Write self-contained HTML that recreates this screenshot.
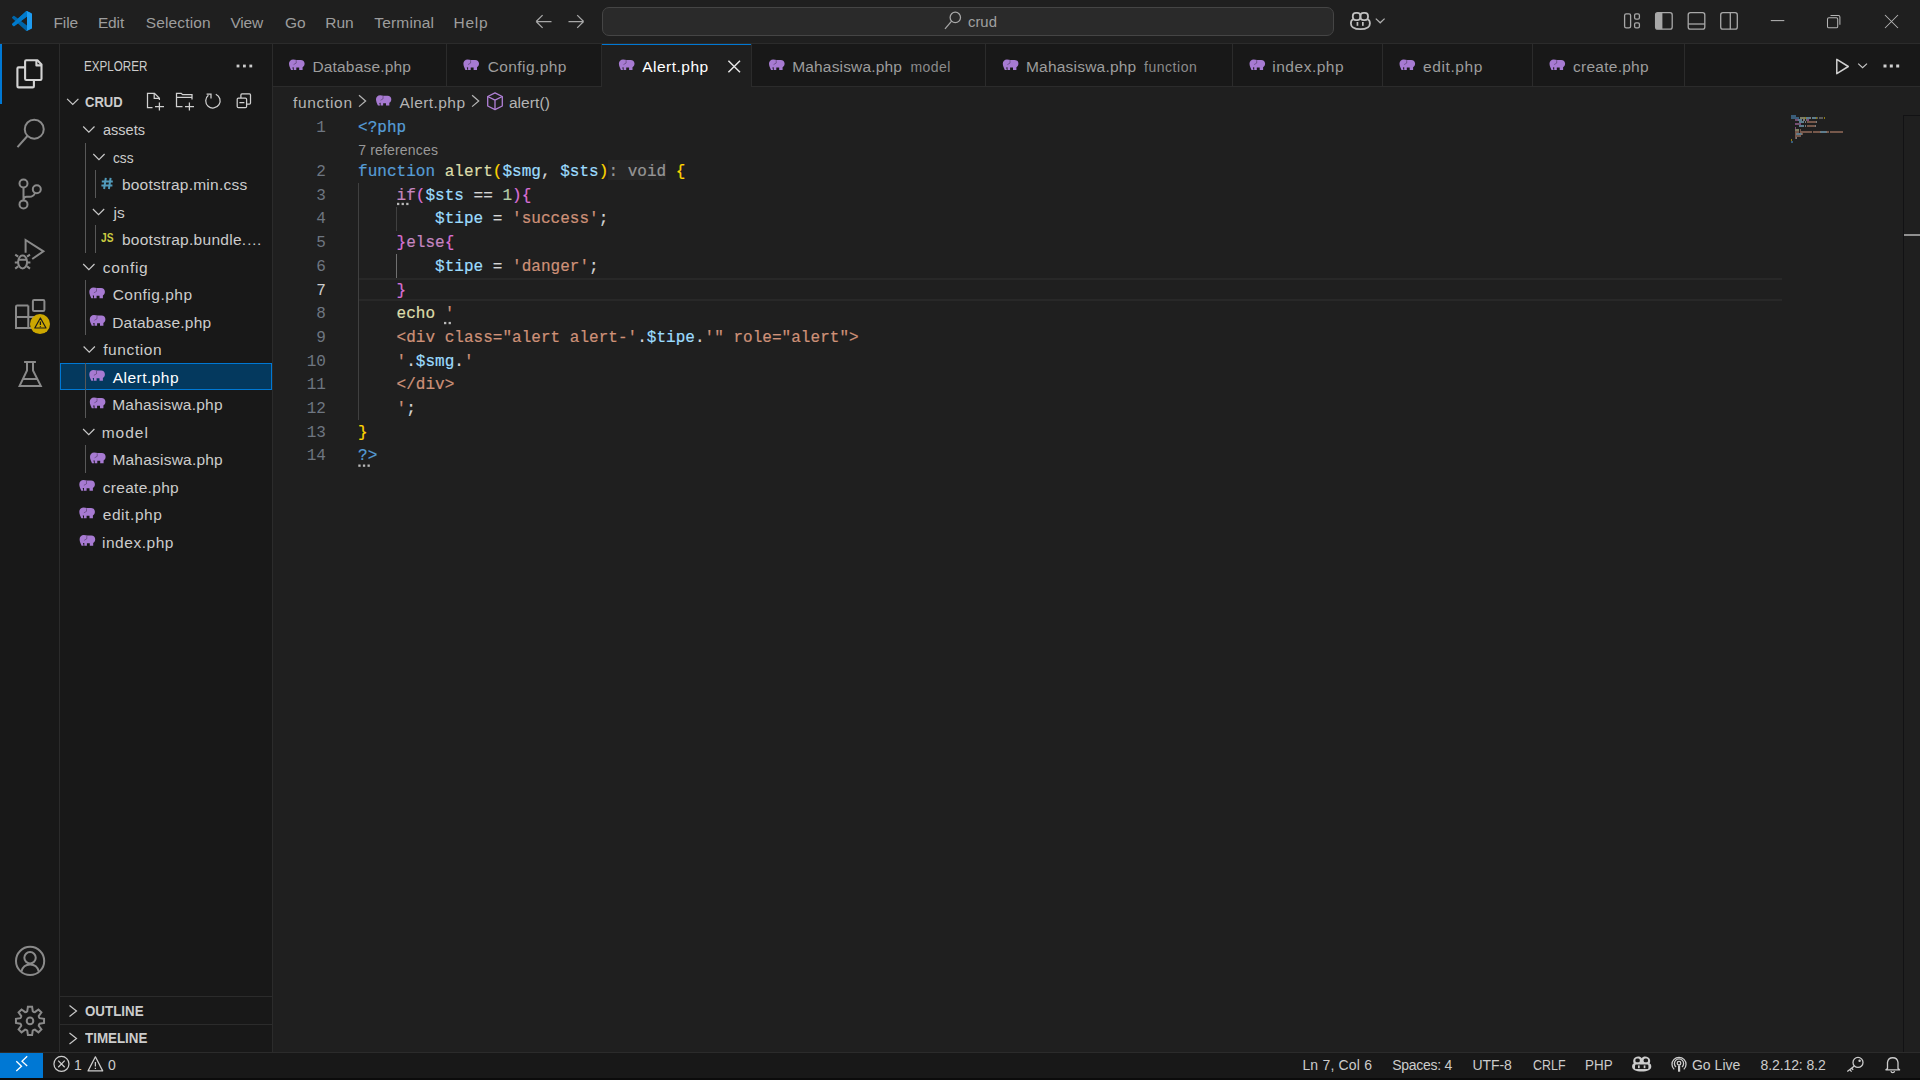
<!DOCTYPE html>
<html><head><meta charset="utf-8">
<style>
*{margin:0;padding:0;box-sizing:border-box}
html,body{width:1920px;height:1080px;overflow:hidden;background:#1f1f1f;font-family:"Liberation Sans",sans-serif;color:#cccccc}
.a{position:absolute}
.t{position:absolute;white-space:pre;line-height:1}
svg{position:absolute;overflow:visible}
.code,.ln{position:absolute;font-family:"Liberation Mono",monospace;font-size:16px;line-height:23.7px;white-space:pre;letter-spacing:0.025px}
.code{left:358px;color:#d4d4d4;-webkit-text-stroke:0.2px currentColor}
.ln{color:#6e7681;width:60px;text-align:right;left:266px}
.kw{color:#569cd6}.fn{color:#dcdcaa}.vr{color:#9cdcfe}.ctl{color:#c586c0}.str{color:#ce9178}.num{color:#b5cea8}.b1{color:#ffd700}.b2{color:#da70d6}.b3{color:#179fff}
.ih{color:#969696}
</style></head><body>
<svg width="0" height="0" style="position:absolute"><defs>
<g id="ele"><path fill="#a77ad2" d="M4.2 0.2C1.8 0.2 0 1.9 0 4.3C0 6.5 1 8.6 2 10.8H4.1L3.4 8.2L4.7 8V10.8H7.3V8.3H10.2V10.8H13.6V8C14.9 7.3 15.6 6 15.6 4.3C15.6 2.2 14 0.7 11.8 0.7H7.6C6.7 0.4 5.5 0.2 4.2 0.2Z"/><path d="M7.2 0.9V3.9L4.6 5.4" fill="none" stroke="#000" stroke-opacity="0.45" stroke-width="0.7"/></g>
<g id="earline"></g>
</defs></svg>
<div class="a" style="left:0px;top:0px;width:1920px;height:43px;background:#1f1f1f;"></div>
<div class="a" style="left:0px;top:43px;width:1920px;height:1px;background:#2b2b2b;"></div>
<div class="a" style="left:0px;top:44px;width:59px;height:1008px;background:#181818;"></div>
<div class="a" style="left:59px;top:44px;width:1px;height:1008px;background:#2b2b2b;"></div>
<div class="a" style="left:0px;top:44px;width:2px;height:60px;background:#0078d4;"></div>
<div class="a" style="left:60px;top:44px;width:212px;height:1008px;background:#181818;"></div>
<div class="a" style="left:272px;top:44px;width:1px;height:1008px;background:#2b2b2b;"></div>
<div class="a" style="left:273px;top:44px;width:1647px;height:42px;background:#181818;"></div>
<div class="a" style="left:273px;top:86px;width:1647px;height:1px;background:#2b2b2b;"></div>
<div class="a" style="left:0px;top:1053px;width:1920px;height:25px;background:#181818;"></div>
<div class="a" style="left:0px;top:1052px;width:1920px;height:1px;background:#2b2b2b;"></div>
<div class="a" style="left:0px;top:1053px;width:43px;height:25px;background:#0078d4;"></div>
<div class="a" style="left:0px;top:1078px;width:1920px;height:2px;background:#0b0b0b;"></div>
<svg width="20" height="20" viewBox="0 0 100 100" style="left:12px;top:11px">
<path fill="#0065a9" d="M96.5 10.8 75.9 0.9a6.2 6.2 0 0 0-7.1 1.2L29.4 38 12.2 25a4.2 4.2 0 0 0-5.3.2L1.4 30.2a4.2 4.2 0 0 0 0 6.2L16.3 50 1.4 63.6a4.2 4.2 0 0 0 0 6.2l5.5 5a4.2 4.2 0 0 0 5.3.2l17.2-13 39.4 35.9a6.2 6.2 0 0 0 7.1 1.2l20.6-9.9A6.2 6.2 0 0 0 100 83.6V16.4a6.2 6.2 0 0 0-3.5-5.6zM75 72.7 45.1 50 75 27.3z"/>
<path fill="#007acc" d="M96.5 10.8 75.9 0.9a6.2 6.2 0 0 0-7.1 1.2L1.4 63.6a4.2 4.2 0 0 0 0 6.2l5.5 5a4.2 4.2 0 0 0 5.3.2L93.3 13.5c2.7-2.1 6.7-.2 6.7 3.3v-.2a6.2 6.2 0 0 0-3.5-5.8z"/>
<path fill="#1f9cf0" d="M75.9 99.1a6.2 6.2 0 0 1-7.1-1.2c2.3 2.3 6.2.7 6.2-2.6V4.7c0-3.3-3.9-4.9-6.2-2.6a6.2 6.2 0 0 1 7.1-1.2l20.6 9.9A6.2 6.2 0 0 1 100 16.4v67.2a6.2 6.2 0 0 1-3.5 5.6z"/>
</svg>
<div class="a" style="left:602px;top:7px;width:732px;height:28.8px;background:#2a2a2a;border:1px solid #454545;border-radius:7px;box-sizing:border-box"></div>
<div class="a" style="left:60px;top:362.5px;width:212px;height:27.5px;background:#04395e;border:1px solid #0078d4;box-sizing:border-box"></div>
<div class="a" style="left:85px;top:142.5px;width:1px;height:110px;background:#585858;"></div>
<div class="a" style="left:95px;top:170px;width:1px;height:27.5px;background:#585858;"></div>
<div class="a" style="left:95px;top:225px;width:1px;height:27.5px;background:#585858;"></div>
<div class="a" style="left:85px;top:280px;width:1px;height:55px;background:#585858;"></div>
<div class="a" style="left:85px;top:362.5px;width:1px;height:55px;background:#585858;"></div>
<div class="a" style="left:85px;top:445px;width:1px;height:27.5px;background:#585858;"></div>
<div class="a" style="left:60px;top:996px;width:212px;height:1px;background:#2b2b2b;"></div>
<div class="a" style="left:60px;top:1024px;width:212px;height:1px;background:#2b2b2b;"></div>
<div class="a" style="left:446px;top:44px;width:1px;height:42px;background:#2b2b2b;"></div>
<div class="a" style="left:601px;top:44px;width:1px;height:42px;background:#2b2b2b;"></div>
<div class="a" style="left:601.5px;top:44px;width:149.5px;height:43px;background:#1f1f1f;"></div>
<div class="a" style="left:601.5px;top:44px;width:149.5px;height:1.4px;background:#0078d4;"></div>
<div class="a" style="left:751px;top:44px;width:1px;height:42px;background:#2b2b2b;"></div>
<div class="a" style="left:985px;top:44px;width:1px;height:42px;background:#2b2b2b;"></div>
<div class="a" style="left:1232px;top:44px;width:1px;height:42px;background:#2b2b2b;"></div>
<div class="a" style="left:1382px;top:44px;width:1px;height:42px;background:#2b2b2b;"></div>
<div class="a" style="left:1532px;top:44px;width:1px;height:42px;background:#2b2b2b;"></div>
<div class="a" style="left:1684px;top:44px;width:1px;height:42px;background:#2b2b2b;"></div>
<div class="a" style="left:601px;top:44px;width:1px;height:43px;background:#2b2b2b;"></div>
<div class="a" style="left:608.2px;top:160px;width:57.6px;height:19.8px;background:#262626;"></div>
<div class="a" style="left:358px;top:278.2px;width:1424px;height:1.8px;background:#282828;"></div>
<div class="a" style="left:358px;top:299.2px;width:1424px;height:1.8px;background:#282828;"></div>
<div class="a" style="left:358px;top:183.2px;width:1px;height:237.0px;background:#404040;"></div>
<div class="a" style="left:396px;top:206.9px;width:1px;height:23.7px;background:#404040;"></div>
<div class="a" style="left:396px;top:254.3px;width:1px;height:23.7px;background:#707070;"></div>
<div class="ln" style="top:117.00px;color:#6e7681">1</div>
<div class="code" style="top:117.00px"><span class="kw">&lt;?php</span></div>
<div class="ln" style="top:161.00px;color:#6e7681">2</div>
<div class="code" style="top:161.00px"><span class="kw">function</span> <span class="fn">alert</span><span class="b1">(</span><span class="vr">$smg</span>, <span class="vr">$sts</span><span class="b1">)</span><span class="ih">: void</span> <span class="b1">{</span></div>
<div class="ln" style="top:184.70px;color:#6e7681">3</div>
<div class="code" style="top:184.70px">    <span class="ctl">if</span><span class="b2">(</span><span class="vr">$sts</span> == <span class="num">1</span><span class="b2">){</span></div>
<div class="ln" style="top:208.40px;color:#6e7681">4</div>
<div class="code" style="top:208.40px">        <span class="vr">$tipe</span> = <span class="str">'success'</span>;</div>
<div class="ln" style="top:232.10px;color:#6e7681">5</div>
<div class="code" style="top:232.10px">    <span class="b2">}</span><span class="ctl">else</span><span class="b2">{</span></div>
<div class="ln" style="top:255.80px;color:#6e7681">6</div>
<div class="code" style="top:255.80px">        <span class="vr">$tipe</span> = <span class="str">'danger'</span>;</div>
<div class="ln" style="top:279.50px;color:#cccccc">7</div>
<div class="code" style="top:279.50px">    <span class="b2">}</span></div>
<div class="ln" style="top:303.20px;color:#6e7681">8</div>
<div class="code" style="top:303.20px">    <span class="fn">echo</span> <span class="str">'</span></div>
<div class="ln" style="top:326.90px;color:#6e7681">9</div>
<div class="code" style="top:326.90px">    <span class="str">&lt;div class="alert alert-'</span>.<span class="vr">$tipe</span>.<span class="str">'" role="alert"&gt;</span></div>
<div class="ln" style="top:350.60px;color:#6e7681">10</div>
<div class="code" style="top:350.60px">    <span class="str">'</span>.<span class="vr">$smg</span>.<span class="str">'</span></div>
<div class="ln" style="top:374.30px;color:#6e7681">11</div>
<div class="code" style="top:374.30px">    <span class="str">&lt;/div&gt;</span></div>
<div class="ln" style="top:398.00px;color:#6e7681">12</div>
<div class="code" style="top:398.00px">    <span class="str">'</span>;</div>
<div class="ln" style="top:421.70px;color:#6e7681">13</div>
<div class="code" style="top:421.70px"><span class="b1">}</span></div>
<div class="ln" style="top:445.40px;color:#6e7681">14</div>
<div class="code" style="top:445.40px"><span class="kw">?&gt;</span></div>
<div class="a" style="left:1903px;top:115px;width:1px;height:937px;background:#121214;"></div>
<div class="a" style="left:1903px;top:115px;width:17px;height:1px;background:#121214;"></div>
<div class="a" style="left:1904px;top:234px;width:16px;height:2px;background:#909090;"></div>
<div class="a" style="left:1791px;top:115px;width:5px;height:2px;background:#569cd6;opacity:0.5"></div><div class="a" style="left:1791px;top:117px;width:8px;height:2px;background:#569cd6;opacity:0.5"></div><div class="a" style="left:1800px;top:117px;width:5px;height:2px;background:#dcdcaa;opacity:0.5"></div><div class="a" style="left:1805px;top:117px;width:1px;height:2px;background:#ffd700;opacity:0.5"></div><div class="a" style="left:1806px;top:117px;width:4px;height:2px;background:#9cdcfe;opacity:0.5"></div><div class="a" style="left:1810px;top:117px;width:1px;height:2px;background:#d4d4d4;opacity:0.5"></div><div class="a" style="left:1812px;top:117px;width:4px;height:2px;background:#9cdcfe;opacity:0.5"></div><div class="a" style="left:1816px;top:117px;width:1px;height:2px;background:#ffd700;opacity:0.5"></div><div class="a" style="left:1817px;top:117px;width:1px;height:2px;background:#969696;opacity:0.5"></div><div class="a" style="left:1819px;top:117px;width:4px;height:2px;background:#969696;opacity:0.5"></div><div class="a" style="left:1824px;top:117px;width:1px;height:2px;background:#ffd700;opacity:0.5"></div><div class="a" style="left:1795px;top:119px;width:2px;height:2px;background:#c586c0;opacity:0.5"></div><div class="a" style="left:1797px;top:119px;width:1px;height:2px;background:#da70d6;opacity:0.5"></div><div class="a" style="left:1798px;top:119px;width:4px;height:2px;background:#9cdcfe;opacity:0.5"></div><div class="a" style="left:1803px;top:119px;width:2px;height:2px;background:#d4d4d4;opacity:0.5"></div><div class="a" style="left:1806px;top:119px;width:1px;height:2px;background:#b5cea8;opacity:0.5"></div><div class="a" style="left:1807px;top:119px;width:2px;height:2px;background:#da70d6;opacity:0.5"></div><div class="a" style="left:1799px;top:121px;width:5px;height:2px;background:#9cdcfe;opacity:0.5"></div><div class="a" style="left:1805px;top:121px;width:1px;height:2px;background:#d4d4d4;opacity:0.5"></div><div class="a" style="left:1807px;top:121px;width:9px;height:2px;background:#ce9178;opacity:0.5"></div><div class="a" style="left:1816px;top:121px;width:1px;height:2px;background:#d4d4d4;opacity:0.5"></div><div class="a" style="left:1795px;top:123px;width:1px;height:2px;background:#da70d6;opacity:0.5"></div><div class="a" style="left:1796px;top:123px;width:4px;height:2px;background:#c586c0;opacity:0.5"></div><div class="a" style="left:1800px;top:123px;width:1px;height:2px;background:#da70d6;opacity:0.5"></div><div class="a" style="left:1799px;top:125px;width:5px;height:2px;background:#9cdcfe;opacity:0.5"></div><div class="a" style="left:1805px;top:125px;width:1px;height:2px;background:#d4d4d4;opacity:0.5"></div><div class="a" style="left:1807px;top:125px;width:8px;height:2px;background:#ce9178;opacity:0.5"></div><div class="a" style="left:1815px;top:125px;width:1px;height:2px;background:#d4d4d4;opacity:0.5"></div><div class="a" style="left:1795px;top:127px;width:1px;height:2px;background:#da70d6;opacity:0.5"></div><div class="a" style="left:1795px;top:129px;width:4px;height:2px;background:#dcdcaa;opacity:0.5"></div><div class="a" style="left:1800px;top:129px;width:1px;height:2px;background:#ce9178;opacity:0.5"></div><div class="a" style="left:1795px;top:131px;width:4px;height:2px;background:#ce9178;opacity:0.5"></div><div class="a" style="left:1800px;top:131px;width:12px;height:2px;background:#ce9178;opacity:0.5"></div><div class="a" style="left:1813px;top:131px;width:7px;height:2px;background:#ce9178;opacity:0.5"></div><div class="a" style="left:1820px;top:131px;width:1px;height:2px;background:#d4d4d4;opacity:0.5"></div><div class="a" style="left:1821px;top:131px;width:5px;height:2px;background:#9cdcfe;opacity:0.5"></div><div class="a" style="left:1826px;top:131px;width:1px;height:2px;background:#d4d4d4;opacity:0.5"></div><div class="a" style="left:1827px;top:131px;width:2px;height:2px;background:#ce9178;opacity:0.5"></div><div class="a" style="left:1830px;top:131px;width:13px;height:2px;background:#ce9178;opacity:0.5"></div><div class="a" style="left:1795px;top:133px;width:1px;height:2px;background:#ce9178;opacity:0.5"></div><div class="a" style="left:1796px;top:133px;width:1px;height:2px;background:#d4d4d4;opacity:0.5"></div><div class="a" style="left:1797px;top:133px;width:4px;height:2px;background:#9cdcfe;opacity:0.5"></div><div class="a" style="left:1801px;top:133px;width:1px;height:2px;background:#d4d4d4;opacity:0.5"></div><div class="a" style="left:1802px;top:133px;width:1px;height:2px;background:#ce9178;opacity:0.5"></div><div class="a" style="left:1795px;top:135px;width:6px;height:2px;background:#ce9178;opacity:0.5"></div><div class="a" style="left:1795px;top:137px;width:1px;height:2px;background:#ce9178;opacity:0.5"></div><div class="a" style="left:1796px;top:137px;width:1px;height:2px;background:#d4d4d4;opacity:0.5"></div><div class="a" style="left:1791px;top:139px;width:1px;height:2px;background:#ffd700;opacity:0.5"></div><div class="a" style="left:1791px;top:141px;width:2px;height:2px;background:#569cd6;opacity:0.5"></div>
<svg width="1920" height="1080" style="left:0;top:0"><g fill="none" stroke="#a8a8a8" stroke-width="1.25" stroke-linecap="butt">
<path d="M536.2 21.5H551.5M536.2 21.5L542.6 15.1M536.2 21.5L542.6 27.9"/>
<path d="M568.5 21.5H583.6M583.6 21.5L577.2 15.1M583.6 21.5L577.2 27.9"/>
<circle cx="955.3" cy="17.4" r="5.2"/><path d="M951.6 21.2L945 28.8"/>
</g>
<g fill="none" stroke="#c0c0c0" stroke-width="1.8">
<rect x="1352.8" y="12.8" width="7.6" height="7.4" rx="3.2"/><rect x="1360.4" y="12.8" width="7.6" height="7.4" rx="3.2"/>
<path d="M1353 19.5C1351.3 20 1350.9 21.5 1350.9 23.5C1350.9 27.5 1355 29.2 1360.4 29.2C1365.8 29.2 1369.9 27.5 1369.9 23.5C1369.9 21.5 1369.5 20 1367.8 19.5"/></g>
<rect x="1356.6" y="22" width="1.7" height="3.8" fill="#c0c0c0"/><rect x="1362" y="22" width="1.7" height="3.8" fill="#c0c0c0"/>
<path d="M1375.8 18.6L1380.2 22.8L1384.6 18.6" fill="none" stroke="#b0b0b0" stroke-width="1.2"/>
<g fill="none" stroke="#a8a8a8" stroke-width="1.3">
<rect x="1624.6" y="13.8" width="6" height="14" rx="1.6"/><rect x="1634.6" y="13.8" width="4.8" height="5.4" rx="1.4"/><rect x="1634.6" y="22.9" width="4.8" height="4.9" rx="1.4"/>
<rect x="1655.6" y="12.7" width="16.6" height="16.5" rx="2.2"/>
<rect x="1688.2" y="12.7" width="16.6" height="16.5" rx="2.2"/><path d="M1688.2 24H1704.8"/>
<rect x="1720.7" y="12.7" width="16.6" height="16.5" rx="2.2"/><path d="M1730.3 12.7V29.2"/>
</g><path d="M1657.8 12.7H1662.4V29.2H1657.8A2.2 2.2 0 0 1 1655.6 27V14.9A2.2 2.2 0 0 1 1657.8 12.7Z" fill="#a8a8a8"/>
<g fill="none" stroke="#b4b4b4" stroke-width="1.05">
<path d="M1770.8 20.6H1784.3"/>
<rect x="1827.5" y="17.8" width="10.2" height="10" rx="1.4"/><path d="M1830.5 15.4H1838.3A1.6 1.6 0 0 1 1839.9 17V24.7"/>
<path d="M1885 15L1898 28M1898 15L1885 28"/></g>
<g fill="none" stroke="#d4d4d4" stroke-width="2.1" stroke-linejoin="round">
<path d="M26.3 60.3H37.4L41.5 64.4V78.8A1.2 1.2 0 0 1 40.3 80H26.3A1.2 1.2 0 0 1 25.1 78.8V61.5A1.2 1.2 0 0 1 26.3 60.3Z"/>
<path d="M36.4 60.3V65.4H41.5"/>
<path d="M25.1 67.4H18.6A1.2 1.2 0 0 0 17.4 68.6V86.2A1.2 1.2 0 0 0 18.6 87.4H32.7A1.2 1.2 0 0 0 33.9 86.2V80"/>
</g>
<g fill="none" stroke="#8a8a8a" stroke-width="2">
<circle cx="34.25" cy="129.15" r="9.5"/><path d="M27.4 136L17.5 147.2"/>
<circle cx="23.5" cy="183.5" r="4"/><circle cx="36.8" cy="189.3" r="4"/><circle cx="23.5" cy="204.4" r="4"/><path d="M23.5 187.5V200.4M35 193Q33.5 196.8 29.5 196.8H26.5Q24 196.8 23.5 199.8"/>
<path d="M25.6 252.7V240L43.4 251.3L32.2 259"/><ellipse cx="22.6" cy="262" rx="4.5" ry="6.4"/><path d="M18.2 259.7H27M18.2 256.6L15.2 254.6M27 256.6L30 254.6M18 262.6H14.8M27.2 262.6H30.4M18.2 266.4L15.2 268.6M27 266.4L30 268.6"/>
<path d="M28.3 305.5H17.2A1.2 1.2 0 0 0 16 306.7V328.1H37.5V317H16M28.3 305.5V328.1"/><rect x="32.9" y="300" width="11.5" height="11" rx="1.2"/>
<path d="M24.1 362H35.9M27 362V370.5L19.6 385.9H40.8L33 370.5V362M23.2 378.9H37.2"/>
<circle cx="30.1" cy="960.9" r="14.1"/><circle cx="30.05" cy="957.7" r="5.7"/><path d="M21.4 971.6C22.5 967 25.8 964.5 30.1 964.5S37.7 967 38.8 971.6"/>
<path stroke-linejoin="miter" d="M27.90 1006.86 L32.10 1006.86 L32.76 1011.29 L33.71 1011.94 L34.85 1012.15 L38.45 1009.49 L41.41 1012.45 L38.75 1016.05 L38.96 1017.19 L39.61 1018.14 L44.04 1018.80 L44.04 1023.00 L39.61 1023.66 L38.96 1024.61 L38.75 1025.75 L41.41 1029.35 L38.45 1032.31 L34.85 1029.65 L33.71 1029.86 L32.76 1030.51 L32.10 1034.94 L27.90 1034.94 L27.24 1030.51 L26.29 1029.86 L25.15 1029.65 L21.55 1032.31 L18.59 1029.35 L21.25 1025.75 L21.04 1024.61 L20.39 1023.66 L15.96 1023.00 L15.96 1018.80 L20.39 1018.14 L21.04 1017.19 L21.25 1016.05 L18.59 1012.45 L21.55 1009.49 L25.15 1012.15 L26.29 1011.94 L27.24 1011.29 Z"/><circle cx="30" cy="1020.9" r="3.3"/>
</g>
<circle cx="40" cy="324.1" r="10" fill="#cca700"/><path d="M40.4 318L46 328H34.8Z" fill="none" stroke="#1a1a1a" stroke-width="1.2" stroke-linejoin="round"/><path d="M40.4 321.4V325M40.4 326.2V327.2" stroke="#1a1a1a" stroke-width="1.3"/>
<g fill="#cccccc"><rect x="236.6" y="64.6" width="2.8" height="2.8"/><rect x="243" y="64.6" width="2.8" height="2.8"/><rect x="249.4" y="64.6" width="2.8" height="2.8"/></g>
<path d="M67.10 98.80L72.75 104.50L78.40 98.80" fill="none" stroke="#c8c8c8" stroke-width="1.2"/>
<g fill="none" stroke="#d0d0d0" stroke-width="1.25">
<path d="M152.5 107.5H147.5V93.3H154.5L159.4 98.2V100"/><path d="M154.2 93.3V98.3H159.4"/><path d="M159.4 102.4V110.5M155 106.6H164"/>
<path d="M182.5 106.6H176.5V93.3H181.2L182.6 94.7H192V99.6"/><path d="M176.5 97.4H192"/><path d="M189.4 102.4V110.5M185 106.6H194"/>
<path d="M208.4 95.2A7.2 7.2 0 1 0 215.8 94.2"/><path d="M206.6 94H211V98.4"/>
<rect x="237.2" y="98" width="9.4" height="9.7" rx="1.2"/><path d="M240.9 98V94.9A1 1 0 0 1 241.9 93.9H249.5A1 1 0 0 1 250.5 94.9V103A1 1 0 0 1 249.5 104H246.6M239.4 102.7H244.4"/>
</g>
<path d="M83.20 126.50L88.85 132.20L94.50 126.50" fill="none" stroke="#c8c8c8" stroke-width="1.2"/>
<path d="M93.30 154.00L98.95 159.70L104.60 154.00" fill="none" stroke="#c8c8c8" stroke-width="1.2"/>
<path d="M105.80 177.80L104.10 189.00M110.60 177.80L108.90 189.00M101.80 181.40H112.80M101.40 185.40H112.40" fill="none" stroke="#519aba" stroke-width="2"/>
<path d="M92.90 209.00L98.55 214.70L104.20 209.00" fill="none" stroke="#c8c8c8" stroke-width="1.2"/>
<path d="M83.20 264.00L88.85 269.70L94.50 264.00" fill="none" stroke="#c8c8c8" stroke-width="1.2"/>
<use href="#ele" transform="translate(89.30,287.40) scale(1.0)"/>
<use href="#ele" transform="translate(89.80,314.90) scale(1.0)"/>
<path d="M83.60 346.50L89.25 352.20L94.90 346.50" fill="none" stroke="#c8c8c8" stroke-width="1.2"/>
<use href="#ele" transform="translate(89.30,369.90) scale(1.0)"/>
<use href="#ele" transform="translate(89.80,397.40) scale(1.0)"/>
<path d="M83.10 429.00L88.75 434.70L94.40 429.00" fill="none" stroke="#c8c8c8" stroke-width="1.2"/>
<use href="#ele" transform="translate(90.00,452.40) scale(1.0)"/>
<use href="#ele" transform="translate(79.30,479.90) scale(1.0)"/>
<use href="#ele" transform="translate(79.30,507.40) scale(1.0)"/>
<use href="#ele" transform="translate(79.60,534.90) scale(1.0)"/>
<path d="M69.50 1005.50L76.50 1011.00L69.50 1016.50" fill="none" stroke="#c8c8c8" stroke-width="1.2"/>
<path d="M69.50 1033.00L76.50 1038.50L69.50 1044.00" fill="none" stroke="#c8c8c8" stroke-width="1.2"/>
<use href="#ele" transform="translate(289.00,59.20) scale(1.0)"/>
<use href="#ele" transform="translate(463.40,59.20) scale(1.0)"/>
<use href="#ele" transform="translate(618.90,59.20) scale(1.0)"/>
<path d="M728.4 60.8L740 72.2M740 60.8L728.4 72.2" stroke="#e6e6e6" stroke-width="1.5"/>
<use href="#ele" transform="translate(769.00,59.20) scale(1.0)"/>
<use href="#ele" transform="translate(1002.80,59.20) scale(1.0)"/>
<use href="#ele" transform="translate(1249.50,59.20) scale(1.0)"/>
<use href="#ele" transform="translate(1399.50,59.20) scale(1.0)"/>
<use href="#ele" transform="translate(1549.50,59.20) scale(1.0)"/>
<path d="M1836.8 59.3V73.7L1848.3 66.5Z" fill="none" stroke="#d0d0d0" stroke-width="1.5" stroke-linejoin="round"/>
<path d="M1858.2 63.6L1862.6 67.6L1867 63.6" fill="none" stroke="#c8c8c8" stroke-width="1.2"/>
<g fill="#d0d0d0"><rect x="1883.5" y="64.5" width="3" height="3"/><rect x="1889.8" y="64.5" width="3" height="3"/><rect x="1896.2" y="64.5" width="3" height="3"/></g>
<path d="M359.00 95.30L365.60 100.95L359.00 106.60" fill="none" stroke="#b4b4b4" stroke-width="1.25"/>
<use href="#ele" transform="translate(376.00,95.00) scale(0.98)"/>
<path d="M472.10 95.30L478.70 100.95L472.10 106.60" fill="none" stroke="#b4b4b4" stroke-width="1.25"/>
<g fill="none" stroke="#b180d7" stroke-width="1.3" stroke-linejoin="round"><path d="M495 92.8L502.3 96.5V106L495 109.7L487.7 106V96.5Z"/><path d="M487.7 96.5L495 100.2L502.3 96.5M495 100.2V109.7"/></g>
<g fill="#b8b8b8">
<rect x="397.00" y="202.8" width="2.3" height="2.3"/>
<rect x="401.60" y="202.8" width="2.3" height="2.3"/>
<rect x="406.20" y="202.8" width="2.3" height="2.3"/>
<rect x="444.00" y="321.9" width="2.3" height="2.3"/>
<rect x="448.60" y="321.9" width="2.3" height="2.3"/>
<rect x="358.30" y="464.5" width="2.3" height="2.3"/>
<rect x="362.90" y="464.5" width="2.3" height="2.3"/>
<rect x="367.50" y="464.5" width="2.3" height="2.3"/>
</g>
<g fill="none" stroke="#ffffff" stroke-width="1.3"><path d="M16.3 1061.3L21.5 1066.3L16.3 1071"/><path d="M27.2 1056.2L22 1061.2L27.2 1066"/></g>
<g fill="none" stroke="#cccccc" stroke-width="1.25"><circle cx="61.45" cy="1063.9" r="7.5"/><path d="M58.2 1060.6L64.7 1067.2M64.7 1060.6L58.2 1067.2"/>
<path d="M95.4 1056.8L102.7 1070.9H88.1Z" stroke-linejoin="round"/><path d="M95.4 1062V1066.5M95.4 1067.8V1069"/></g>
<g fill="#cccccc"><path d="M1635 1057.5C1637.5 1055.8 1640.5 1056.2 1641.7 1058.2C1642.9 1056.2 1645.9 1055.8 1648.4 1057.5C1650.6 1059 1650.5 1062 1649.6 1063.4C1651 1064 1651.3 1065.3 1651.3 1066.5C1651.3 1069.8 1647.5 1071.5 1641.7 1071.5C1635.9 1071.5 1632.1 1069.8 1632.1 1066.5C1632.1 1065.3 1632.4 1064 1633.8 1063.4C1632.9 1062 1632.8 1059 1635 1057.5Z"/></g>
<g fill="#181818"><rect x="1635.4" y="1058.6" width="4.4" height="3.6" rx="1.5"/><rect x="1643.6" y="1058.6" width="4.4" height="3.6" rx="1.5"/><rect x="1635" y="1064.5" width="13.4" height="4.6" rx="1.2"/></g>
<g fill="#cccccc"><rect x="1638" y="1065.4" width="1.7" height="2.8"/><rect x="1643.7" y="1065.4" width="1.7" height="2.8"/></g>
<g fill="none" stroke="#cccccc" stroke-width="1.3"><circle cx="1679" cy="1063.2" r="1.8"/><path d="M1676 1067A4.6 4.6 0 1 1 1682 1067"/><path d="M1674.2 1069.4A7 7 0 1 1 1683.8 1069.4"/></g><rect x="1678" y="1065.5" width="2.2" height="6.2" fill="#cccccc"/>
<g fill="none" stroke="#cccccc" stroke-width="1.3"><circle cx="1858" cy="1062.4" r="5"/><path d="M1854.4 1066L1847.3 1071.4M1849.7 1069.6L1851.6 1071.6M1851.6 1068.2L1853.2 1069.8"/><circle cx="1859.6" cy="1060.8" r="0.6" fill="#cccccc"/></g>
<g fill="none" stroke="#cccccc" stroke-width="1.3" stroke-linejoin="round"><path d="M1887.5 1068.6V1062.3A5.3 5.3 0 0 1 1898 1062.3V1068.6L1899.6 1069.8H1885.9Z"/><path d="M1890.9 1071.2A1.9 1.9 0 0 0 1894.6 1071.2"/></g></svg>
<div class="t" style="left:53.40px;top:14.78px;font-size:15.5px;color:#9d9d9d;letter-spacing:-0.085px">File</div>
<div class="t" style="left:97.90px;top:14.78px;font-size:15.5px;color:#9d9d9d;letter-spacing:-0.134px">Edit</div>
<div class="t" style="left:145.70px;top:14.78px;font-size:15.5px;color:#9d9d9d;letter-spacing:0.145px">Selection</div>
<div class="t" style="left:230.50px;top:14.78px;font-size:15.5px;color:#9d9d9d;letter-spacing:-0.207px">View</div>
<div class="t" style="left:284.90px;top:14.78px;font-size:15.5px;color:#9d9d9d;letter-spacing:-0.056px">Go</div>
<div class="t" style="left:325.20px;top:14.78px;font-size:15.5px;color:#9d9d9d">Run</div>
<div class="t" style="left:374.30px;top:14.78px;font-size:15.5px;color:#9d9d9d;letter-spacing:0.167px">Terminal</div>
<div class="t" style="left:453.50px;top:14.78px;font-size:15.5px;color:#9d9d9d;letter-spacing:0.714px">Help</div>
<div class="t" style="left:967.70px;top:14.18px;font-size:15.5px;color:#a0a0a0;transform:scaleX(0.9583);transform-origin:0 0">crud</div>
<div class="t" style="left:84.37px;top:59.45px;font-size:14px;color:#cccccc;transform:scaleX(0.8318);transform-origin:0 0">EXPLORER</div>
<div class="t" style="left:85.20px;top:95.15px;font-size:14px;color:#cccccc;font-weight:bold;transform:scaleX(0.9298);transform-origin:0 0">CRUD</div>
<div class="t" style="left:102.80px;top:122.18px;font-size:15.5px;color:#cccccc;transform:scaleX(0.9368);transform-origin:0 0">assets</div>
<div class="t" style="left:112.90px;top:149.68px;font-size:15.5px;color:#cccccc;transform:scaleX(0.8851);transform-origin:0 0">css</div>
<div class="t" style="left:121.90px;top:177.18px;font-size:15.5px;color:#cccccc;letter-spacing:0.237px">bootstrap.min.css</div>
<div class="t" style="left:113.50px;top:204.68px;font-size:15.5px;color:#cccccc">js</div>
<div class="t" style="left:121.90px;top:232.18px;font-size:15.5px;color:#cccccc;letter-spacing:0.277px">bootstrap.bundle.…</div>
<div class="t" style="left:100.90px;top:231.47px;font-size:13.5px;color:#cbcb41;font-weight:bold;transform:scaleX(0.7572);transform-origin:0 0">JS</div>
<div class="t" style="left:102.80px;top:259.68px;font-size:15.5px;color:#cccccc;letter-spacing:0.712px">config</div>
<div class="t" style="left:112.70px;top:287.18px;font-size:15.5px;color:#cccccc;letter-spacing:0.483px">Config.php</div>
<div class="t" style="left:112.20px;top:314.68px;font-size:15.5px;color:#cccccc;letter-spacing:0.218px">Database.php</div>
<div class="t" style="left:103.20px;top:342.18px;font-size:15.5px;color:#cccccc;letter-spacing:0.605px">function</div>
<div class="t" style="left:112.70px;top:369.68px;font-size:15.5px;color:#ffffff;letter-spacing:0.473px">Alert.php</div>
<div class="t" style="left:112.20px;top:397.18px;font-size:15.5px;color:#cccccc;letter-spacing:0.219px">Mahasiswa.php</div>
<div class="t" style="left:101.70px;top:424.68px;font-size:15.5px;color:#cccccc;letter-spacing:1.007px">model</div>
<div class="t" style="left:112.40px;top:452.18px;font-size:15.5px;color:#cccccc;letter-spacing:0.219px">Mahasiswa.php</div>
<div class="t" style="left:102.70px;top:479.68px;font-size:15.5px;color:#cccccc;letter-spacing:0.308px">create.php</div>
<div class="t" style="left:102.70px;top:507.18px;font-size:15.5px;color:#cccccc;letter-spacing:0.580px">edit.php</div>
<div class="t" style="left:102.00px;top:534.68px;font-size:15.5px;color:#cccccc;letter-spacing:0.525px">index.php</div>
<div class="t" style="left:85.00px;top:1004.15px;font-size:14px;color:#cccccc;font-weight:bold;transform:scaleX(0.9525);transform-origin:0 0">OUTLINE</div>
<div class="t" style="left:85.00px;top:1031.05px;font-size:14px;color:#cccccc;font-weight:bold;transform:scaleX(0.9555);transform-origin:0 0">TIMELINE</div>
<div class="t" style="left:312.40px;top:58.68px;font-size:15.5px;color:#9d9d9d;letter-spacing:0.182px">Database.php</div>
<div class="t" style="left:487.70px;top:58.68px;font-size:15.5px;color:#9d9d9d;letter-spacing:0.416px">Config.php</div>
<div class="t" style="left:642.30px;top:58.68px;font-size:15.5px;color:#ffffff;letter-spacing:0.473px">Alert.php</div>
<div class="t" style="left:792.20px;top:58.68px;font-size:15.5px;color:#9d9d9d;letter-spacing:0.169px">Mahasiswa.php</div>
<div class="t" style="left:910.40px;top:59.95px;font-size:14px;color:#8b8b8b;letter-spacing:0.445px">model</div>
<div class="t" style="left:1026.00px;top:58.68px;font-size:15.5px;color:#9d9d9d;letter-spacing:0.210px">Mahasiswa.php</div>
<div class="t" style="left:1144.00px;top:59.95px;font-size:14px;color:#8b8b8b;letter-spacing:0.536px">function</div>
<div class="t" style="left:1272.25px;top:58.68px;font-size:15.5px;color:#9d9d9d;letter-spacing:0.519px">index.php</div>
<div class="t" style="left:1423.00px;top:58.68px;font-size:15.5px;color:#9d9d9d;letter-spacing:0.602px">edit.php</div>
<div class="t" style="left:1573.00px;top:58.68px;font-size:15.5px;color:#9d9d9d;letter-spacing:0.264px">create.php</div>
<div class="t" style="left:293.00px;top:94.58px;font-size:15.5px;color:#b4b4b4;letter-spacing:0.676px">function</div>
<div class="t" style="left:399.50px;top:94.58px;font-size:15.5px;color:#b4b4b4;letter-spacing:0.435px">Alert.php</div>
<div class="t" style="left:508.90px;top:94.58px;font-size:15.5px;color:#b4b4b4;letter-spacing:0.081px">alert()</div>
<div class="t" style="left:358.20px;top:143.25px;font-size:14px;color:#999999;letter-spacing:0.171px">7 references</div>
<div class="t" style="left:74.00px;top:1057.85px;font-size:14px;color:#cccccc">1</div>
<div class="t" style="left:108.00px;top:1057.85px;font-size:14px;color:#cccccc">0</div>
<div class="t" style="left:1302.40px;top:1057.85px;font-size:14px;color:#cccccc;letter-spacing:0.188px">Ln 7, Col 6</div>
<div class="t" style="left:1392.30px;top:1057.85px;font-size:14px;color:#cccccc;letter-spacing:-0.297px">Spaces: 4</div>
<div class="t" style="left:1472.60px;top:1057.85px;font-size:14px;color:#cccccc;letter-spacing:-0.094px">UTF-8</div>
<div class="t" style="left:1532.70px;top:1057.85px;font-size:14px;color:#cccccc;transform:scaleX(0.8887);transform-origin:0 0">CRLF</div>
<div class="t" style="left:1585.04px;top:1057.85px;font-size:14px;color:#cccccc;transform:scaleX(0.9582);transform-origin:0 0">PHP</div>
<div class="t" style="left:1691.90px;top:1057.85px;font-size:14px;color:#cccccc;letter-spacing:0.040px">Go Live</div>
<div class="t" style="left:1760.60px;top:1057.85px;font-size:14px;color:#cccccc;letter-spacing:-0.108px">8.2.12: 8.2</div>
</body></html>
